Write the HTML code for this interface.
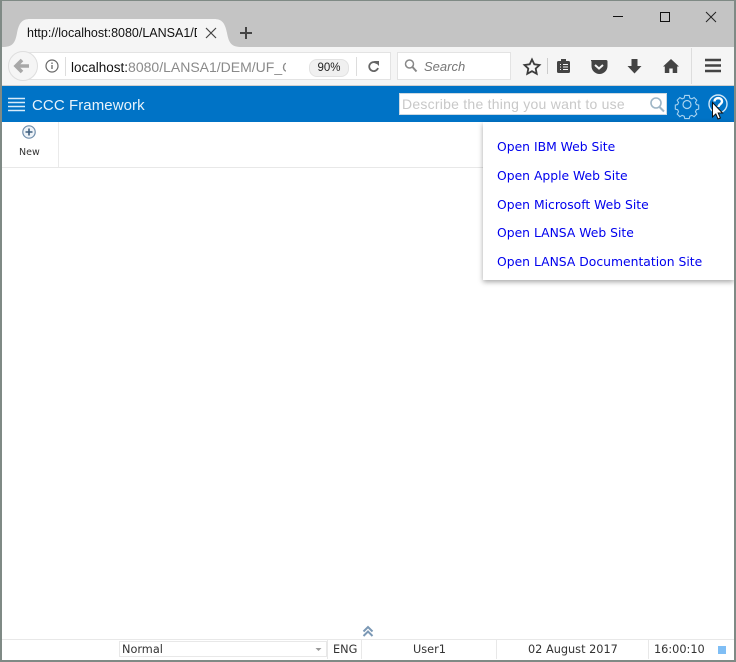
<!DOCTYPE html>
<html><head><meta charset="utf-8"><style>
html,body{margin:0;padding:0;width:736px;height:662px;overflow:hidden;background:#fff}
div,span,svg{position:absolute}
.t{white-space:nowrap;font-family:"Liberation Sans",sans-serif}
.v{white-space:nowrap;font-family:"DejaVu Sans",sans-serif;font-size:11.3px;color:#333;line-height:14px}
.m{white-space:nowrap;font-family:"DejaVu Sans",sans-serif;font-size:12.36px;color:#0000ee;line-height:16px;left:497px}
</style></head><body>
<div style="left:0;top:0;width:736px;height:47px;background:#c4c4c4"></div>
<svg style="left:0;top:0" width="736" height="86" viewBox="0 0 736 86">
<path d="M2 47C12 47 15 44 17 33C19 23 22 19 30 19H214C222 19 225 23 227 33C229 44 232 47 242 47Z" fill="#f5f5f5"/>
<path d="M206 28l10 10M216 28l-10 10" stroke="#444" stroke-width="1.2" fill="none"/>
<path d="M246 27v12M240 33h12" stroke="#444" stroke-width="2" fill="none"/>
<path d="M613 16.500h10" stroke="#111" stroke-width="1" fill="none"/>
<rect x="660.5" y="12.5" width="9" height="9" stroke="#111" fill="none"/>
<path d="M706 12l10 10M716 12l-10 10" stroke="#222" stroke-width="1" fill="none"/>
</svg>
<div style="left:0;top:47px;width:736px;height:38px;background:#f5f5f5"></div>
<div style="left:0;top:85px;width:736px;height:1px;background:#d0d0d0"></div>
<div class="t" style="left:27px;top:25px;font-size:12.5px;color:#111;line-height:16px;width:170px;overflow:hidden">http://localhost:8080/LANSA1/D</div>
<div style="left:24px;top:52px;width:366px;height:26px;background:#fff;border:1px solid #e3e3e3;border-left:0"></div>
<div style="left:8px;top:51px;width:28px;height:28px;background:#f5f5f5;border:1px solid #dedede;border-radius:50%"></div>
<div style="left:397px;top:52px;width:112px;height:26px;background:#fff;border:1px solid #e3e3e3"></div>
<svg style="left:0;top:47px" width="736" height="38" viewBox="0 47 736 38">
<path d="M22 60l-6 6 6 6M17 66h12" fill="none" stroke="#a8a8a8" stroke-width="3.600"/>
<circle cx="52" cy="66" r="6" fill="none" stroke="#666" stroke-width="1.200"/>
<path d="M52 65v4M52 62.500v1.500" stroke="#666" stroke-width="1.300"/>
<path d="M65.500 57v19" stroke="#ddd"/>
<path d="M356.500 57v19" stroke="#ddd"/>
<path d="M377 63.500A4.500 4.500 0 1 0 378 68" fill="none" stroke="#666" stroke-width="1.800"/>
<path d="M374 61h5v5z" fill="#666"/>
<circle cx="409.500" cy="64" r="4" fill="none" stroke="#888" stroke-width="1.500"/>
<path d="M412.500 67l4 4.500" stroke="#888" stroke-width="2"/>
<path d="M532 59.500l2.300 4.800 5.200.7-3.800 3.600 1 5.200-4.700-2.600-4.700 2.600 1-5.200-3.800-3.600 5.200-.7z" fill="none" stroke="#3c3c3c" stroke-width="1.800"/>
<path d="M547.500 58v16" stroke="#ccc"/>
<rect x="557" y="61" width="13" height="12" rx="1.500" fill="#444"/><rect x="561" y="59" width="5" height="3" fill="#444"/>
<path d="M560 64.500h1M563 64.500h5M560 67h1M563 67h5M560 69.500h1M563 69.500h5" stroke="#f5f5f5"/>
<path d="M591 60h15a1.500 1.500 0 0 1 1.500 1.500V66a8 8 0 0 1-16 0v-4.500A1.500 1.500 0 0 1 591 60z" fill="#444"/>
<path d="M595 65l4 3.500 4-3.500" stroke="#f5f5f5" stroke-width="2" fill="none"/>
<path d="M631.500 59h6v7h4l-7 7.500-7-7.500h4z" fill="#444"/>
<path d="M671 59l-8 7.500h1.800V73h4.500v-4.500h3.400V73h4.500v-6.500h1.800z" fill="#444"/>
<path d="M691.500 48v36" stroke="#ddd"/>
<path d="M705 60h16M705 65.500h16M705 71h16" stroke="#444" stroke-width="2.400"/>
</svg>
<div class="t" style="left:71px;top:58px;font-size:14px;line-height:18px;color:#8a8a8a;width:215px;overflow:hidden"><span style="position:static;color:#111;font-size:13.5px">localhost:</span>8080/LANSA1/DEM/UF_C</div>
<div class="t" style="left:309px;top:59px;width:38px;height:16px;background:#f0f0f0;border:1px solid #e2e2e2;border-radius:8px;font-size:11.500px;line-height:16px;text-align:center;color:#222">90%</div>
<div class="t" style="left:424px;top:59px;font-size:13px;line-height:16px;font-style:italic;color:#777">Search</div>

<div style="left:2px;top:86px;width:732px;height:36px;background:#0073c6"></div>
<svg style="left:0;top:86px" width="736" height="36" viewBox="0 86 736 36">
<path d="M8 98.500h17M8 102.500h17M8 106.500h17M8 110.500h17" stroke="#d8ecfa" stroke-width="1.600"/>
<g fill="none" stroke="#a9d3f0" stroke-width="1.200">
<circle cx="687" cy="104.500" r="4"/>
<path d="M684.500 94.500h5l.6 2.800 2.300 1 2.500-1.500 3 3-1.500 2.500 1 2.300 2.600.6v4.500l-2.600.6-1 2.300 1.500 2.500-3 3-2.500-1.500-2.300 1-.6 2.600h-5l-.6-2.600-2.300-1-2.500 1.500-3-3 1.500-2.500-1-2.300-2.600-.6v-4.500l2.600-.6 1-2.300-1.500-2.500 3-3 2.500 1.500 2.300-1z" transform="translate(68.700 10.400) scale(.9)"/>
</g>
<circle cx="718" cy="104" r="9" fill="none" stroke="#cfe6f7" stroke-width="1.400"/>
<path d="M714.500 101.500c0-4.500 7.500-4.500 7.500 0c0 2.500-3.500 2.800-3.500 5.500" fill="none" stroke="#fff" stroke-width="2.400"/>
<path d="M712.500 102.500V117l3.300-3 2.200 5 2.400-1-2.200-5h4.300z" fill="#fff" stroke="#111" stroke-width="1"/>
</svg>
<div class="t" style="left:32px;top:96px;font-size:15px;line-height:19px;color:#e8f3fb;letter-spacing:.08px">CCC Framework</div>
<div style="left:399px;top:93px;width:266px;height:20px;background:#fff;border:1px solid #ccd9e2;box-sizing:content-box"></div>
<div class="t" style="left:402px;top:96px;font-size:14px;line-height:17px;color:#c8c8c8;letter-spacing:.24px">Describe the thing you want to use</div>
<svg style="left:399px;top:93px;z-index:2" width="268" height="22" viewBox="399 93 268 22">
<circle cx="656" cy="103" r="5" fill="none" stroke="#9fb6c6" stroke-width="1.600"/>
<path d="M659.500 107l4.500 4.500" stroke="#9fb6c6" stroke-width="2"/>
</svg>

<div style="left:58px;top:122px;width:1px;height:45px;background:#eaeaea"></div>
<div style="left:2px;top:167px;width:732px;height:1px;background:#e8e8e8"></div>
<svg style="left:20px;top:124px" width="18" height="18" viewBox="0 0 18 18">
<circle cx="9" cy="8" r="6.200" fill="#eef3f8" stroke="#6f8dab" stroke-width="1.200"/>
<path d="M9 4.500v7M5.500 8h7" stroke="#3f5f7f" stroke-width="1.600"/>
</svg>
<div class="v" style="left:19px;top:146px;font-size:9.500px;color:#333">New</div>

<div style="left:483px;top:122px;width:251px;height:158px;background:#fff;box-shadow:0 2px 5px rgba(0,0,0,.35)"></div>
<div class="m" style="top:139px">Open IBM Web Site</div>
<div class="m" style="top:168px">Open Apple Web Site</div>
<div class="m" style="top:197px">Open Microsoft Web Site</div>
<div class="m" style="top:225px">Open LANSA Web Site</div>
<div class="m" style="top:254px">Open LANSA Documentation Site</div>

<svg style="left:361px;top:624px" width="14" height="15" viewBox="0 0 14 15">
<path d="M2.500 7.500L7 3l4.500 4.500M2.500 12L7 7.500l4.500 4.500" fill="none" stroke="#7b98b5" stroke-width="2"/>
</svg>
<div style="left:2px;top:639px;width:732px;height:1px;background:#e8e8e8"></div>
<div style="left:119px;top:641px;width:206px;height:14px;border:1px solid #e8e8e8"></div>
<div class="v" style="left:122px;top:643px">Normal</div>
<svg style="left:315px;top:647px" width="8" height="5"><path d="M0.500 1h6l-3 3z" fill="#999"/></svg>
<div style="left:327px;top:640px;width:1px;height:19px;background:#e8e8e8"></div>
<div class="v" style="left:333px;top:643px">ENG</div>
<div style="left:361px;top:640px;width:1px;height:19px;background:#e8e8e8"></div>
<div class="v" style="left:413px;top:643px">User1</div>
<div style="left:496px;top:640px;width:1px;height:19px;background:#e8e8e8"></div>
<div class="v" style="left:528px;top:643px">02 August 2017</div>
<div style="left:648px;top:640px;width:1px;height:19px;background:#e8e8e8"></div>
<div class="v" style="left:654px;top:643px">16:00:10</div>
<div style="left:718px;top:646px;width:8px;height:8px;background:#7fbef5"></div>

<div style="left:0;top:0;border:solid #7f8a85;border-width:1px 2px 2px 2px;box-sizing:content-box;width:732px;height:659px"></div>
</body></html>
